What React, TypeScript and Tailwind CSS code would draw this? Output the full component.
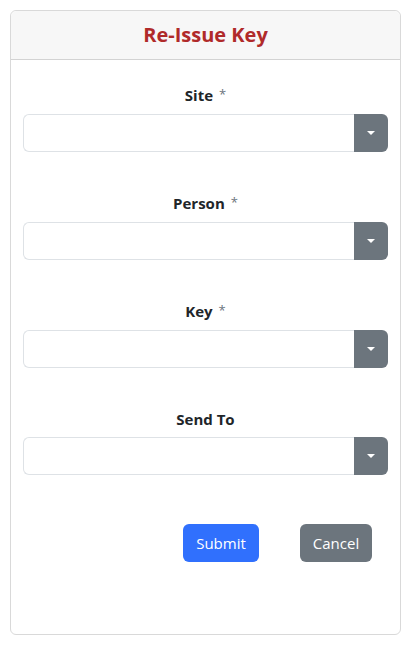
import React, { useState } from 'react';

interface Field {
  id: string;
  label: string;
  required: boolean;
}

const fields: Field[] = [
  { id: 'site', label: 'Site', required: true },
  { id: 'person', label: 'Person', required: true },
  { id: 'key', label: 'Key', required: true },
  { id: 'sendTo', label: 'Send To', required: false },
];

function SelectField({ field }: { field: Field }) {
  const [open, setOpen] = useState(false);
  return (
    <div className="flex flex-col">
      <label className="text-center text-[15px] font-bold leading-[22px] text-[#212529] mb-[7px]">
        {field.label}
        {field.required && <span className="ml-[6px] font-normal text-[#6c757d] text-[13px] relative -top-[2px]">*</span>}
      </label>
      <div className="flex h-[38px]">
        <div className="flex-1 border border-[#dee2e6] border-r-0 rounded-l-[6px] bg-white" />
        <button
          type="button"
          onClick={() => setOpen(!open)}
          className="w-[34px] bg-[#6c757d] rounded-r-[6px] flex items-center justify-center"
        >
          <span className="block w-0 h-0 border-l-[4px] border-r-[4px] border-t-[4px] border-l-transparent border-r-transparent border-t-white" />
        </button>
      </div>
    </div>
  );
}

export default function App() {
  return (
    <div className="bg-white min-h-[645px] p-[10px] font-['Open_Sans',sans-serif]">
      <div className="border border-[#d9d9d9] rounded-[6px] h-[625px] flex flex-col">
        <div className="h-[49px] bg-[#f7f7f7] border-b border-[#d3d3d3] rounded-t-[6px] flex items-center justify-center">
          <h1 className="text-[20px] font-bold text-[#b02a2a] leading-none">Re-Issue Key</h1>
        </div>
        <div className="px-[12px] pt-[24px] flex flex-col gap-[40px]">
          {fields.map(f => (
            <SelectField key={f.id} field={f} />
          ))}
        </div>
        <div className="flex mt-[49px] pl-[172px]">
          <button className="h-[38px] w-[76px] bg-[#3070fd] text-white text-[15px] rounded-[6px]">Submit</button>
          <button className="h-[38px] w-[72px] ml-[41px] bg-[#6c757d] text-white text-[15px] rounded-[6px]">Cancel</button>
        </div>
      </div>
    </div>
  );
}
